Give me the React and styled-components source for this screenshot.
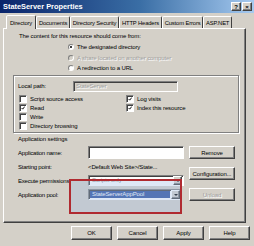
import React from "react";
import styled, { createGlobalStyle, css } from "styled-components";

const Global = createGlobalStyle`
  html, body { margin: 0; padding: 0; background: #d4d0c8; }
  body {
    font-family: "Liberation Sans", Arial, sans-serif;
    font-size: 6px;
    letter-spacing: -0.12px;
    color: #000;
  }
`;

const raised = css`
  border: 1px solid;
  border-color: #fff #404040 #404040 #fff;
  box-shadow: inset -1px -1px 0 #808080;
`;

const sunken = css`
  border: 1px solid;
  border-color: #808080 #fff #fff #808080;
  box-shadow: inset 1px 1px 0 #404040;
`;

const Window = styled.div`
  width: 254px;
  height: 246px;
  box-sizing: border-box;
  background: #d4d0c8;
  display: flex;
  flex-direction: column;
  overflow: hidden;
`;

const TitleBar = styled.div`
  height: 13px;
  display: flex;
  align-items: center;
  justify-content: space-between;
  padding: 0 2px 0 3px;
  background: linear-gradient(to right, #0a246a, #3a6ea5 55%, #a6caf0);
`;

const Title = styled.span`
  color: #fff;
  font-weight: bold;
  font-size: 7.4px;
  letter-spacing: 0;
`;

const Caps = styled.div`
  display: flex;
  gap: 1px;
`;

const CapButton = styled.span`
  ${raised};
  width: 8px;
  height: 7px;
  background: #d4d0c8;
  display: flex;
  align-items: center;
  justify-content: center;
  font-weight: bold;
  font-size: 6px;
  line-height: 1;
`;

const Tabs = styled.div`
  display: flex;
  align-items: flex-end;
  height: 14px;
  padding: 0 0 0 6px;
  margin-top: 1px;
`;

const Tab = styled.div`
  height: ${(p) => (p.$active ? 13 : 11)}px;
  padding: 0 ${(p) => (p.$active ? 3 : 1.8)}px;
  margin-bottom: ${(p) => (p.$active ? -1 : 0)}px;
  display: flex;
  align-items: center;
  border: 1px solid;
  border-bottom: none;
  border-color: #fff #404040 transparent #fff;
  border-radius: 2px 2px 0 0;
  background: #d4d0c8;
  position: relative;
  z-index: ${(p) => (p.$active ? 2 : 1)};
  white-space: nowrap;
  font-size: 5.8px;
`;

const Panel = styled.div`
  height: 195px;
  box-sizing: border-box;
  margin: 0 8px 0 3px;
  border: 1px solid;
  border-color: #fff #404040 #404040 #fff;
  box-shadow: inset -1px -1px 0 #808080;
  padding: 2px 6px 0 9px;
  display: flex;
  flex-direction: column;
`;

const Intro = styled.div`
  height: 10px;
  line-height: 10px;
  padding-left: 6px;
`;

const RadioList = styled.div`
  padding-left: 55px;
  margin-top: 1px;
  display: flex;
  flex-direction: column;
`;

const Row = styled.label`
  display: flex;
  align-items: center;
  gap: 3px;
  height: ${(p) => p.$h || 10.5}px;
  color: ${(p) => (p.$disabled ? "#a0a0a0" : "#000")};
  text-shadow: ${(p) => (p.$disabled ? "1px 1px 0 #fff" : "none")};
  white-space: nowrap;
`;

const RadioDot = styled.span`
  width: 6px;
  height: 6px;
  box-sizing: border-box;
  border-radius: 50%;
  border: 1px solid;
  border-color: #808080 #fff #fff #808080;
  background: ${(p) => (p.$disabled ? "#d4d0c8" : "#fff")};
  display: flex;
  align-items: center;
  justify-content: center;
  &::after {
    content: "";
    width: 2px;
    height: 2px;
    border-radius: 50%;
    background: #000;
    display: ${(p) => (p.$on ? "block" : "none")};
  }
`;

const Group = styled.div`
  margin-top: 1px;
  height: 58px;
  box-sizing: border-box;
  border: 1px solid #808080;
  box-shadow: 1px 1px 0 #fff, inset 1px 1px 0 #fff;
  padding: 4px 4px 0 4px;
`;

const PathRow = styled.div`
  display: flex;
  align-items: center;
  height: 13px;
`;

const PathLabel = styled.span`
  width: 55px;
`;

const TextBox = styled.div`
  ${sunken};
  width: ${(p) => p.$w}px;
  height: ${(p) => p.$h || 11}px;
  box-sizing: border-box;
  background: ${(p) => (p.$disabled ? "#d4d0c8" : "#fff")};
  color: ${(p) => (p.$disabled ? "#a0a0a0" : "#000")};
  text-shadow: ${(p) => (p.$disabled ? "1px 1px 0 #fff" : "none")};
  display: flex;
  align-items: center;
  padding-left: 2px;
  white-space: nowrap;
`;

const Checks = styled.div`
  display: grid;
  grid-template-columns: 107px 1fr;
  margin-top: 2px;
`;

const CheckCol = styled.div`
  display: flex;
  flex-direction: column;
  padding-left: 1px;
`;

const CheckBox = styled.span`
  ${sunken};
  width: 6px;
  height: 6px;
  background: #fff;
  display: flex;
  align-items: center;
  justify-content: center;
`;

const SectionLabel = styled.div`
  height: 10px;
  line-height: 10px;
  margin-top: 1px;
  padding-left: 5px;
`;

const Settings = styled.div`
  position: relative;
  margin-top: 2px;
  padding-left: 5px;
  display: grid;
  grid-template-columns: 65px 96px 46px;
  grid-template-rows: repeat(4, 14px);
  column-gap: 5px;
  align-items: center;
  white-space: nowrap;
`;

const FieldLabel = styled.span`
  letter-spacing: -0.22px;
`;

const Select = styled.div`
  ${sunken};
  width: ${(p) => p.$w}px;
  height: 11px;
  box-sizing: border-box;
  background: #fff;
  display: flex;
  align-items: center;
  gap: 1px;
  padding: 0 1px;
`;

const SelectText = styled.span`
  flex: ${(p) => (p.$selected ? 1 : "none")};
  padding: 0 2px;
  height: 7px;
  line-height: 7px;
  background: ${(p) => (p.$selected ? "#2b4f9c" : "transparent")};
  color: ${(p) => (p.$selected ? "#fff" : "#8c8c8c")};
  margin-right: auto;
`;

const Arrow = styled.span`
  ${raised};
  width: 7px;
  height: 7px;
  background: #d4d0c8;
  display: flex;
  align-items: center;
  justify-content: center;
  &::after {
    content: "";
    border-left: 2px solid transparent;
    border-right: 2px solid transparent;
    border-top: 2px solid #000;
  }
`;

const Button = styled.div`
  ${raised};
  width: ${(p) => p.$w || 44}px;
  height: ${(p) => p.$h || 10}px;
  background: #d4d0c8;
  display: flex;
  align-items: center;
  justify-content: center;
  color: ${(p) => (p.$disabled ? "#a0a0a0" : "#000")};
  text-shadow: ${(p) => (p.$disabled ? "1px 1px 0 #fff" : "none")};
  grid-column: 3;
  grid-row: ${(p) => p.$row || "auto"};
  white-space: nowrap;
`;

const Highlight = styled.div`
  position: absolute;
  left: 56px;
  top: 33px;
  width: 113px;
  height: 35px;
  box-sizing: border-box;
  border: 2px solid #b02a30;
  background: rgba(160, 190, 230, 0.35);
  pointer-events: none;
`;

const Footer = styled.div`
  display: flex;
  justify-content: flex-end;
  gap: 5px;
  padding: 3px 4px 0 0;
`;

const Check = () => (
  <svg width="4" height="4" viewBox="0 0 7 7">
    <path d="M1 3.5 L3 5.5 L6.5 1" stroke="#000" strokeWidth="1.6" fill="none" />
  </svg>
);

const CheckItem = ({ checked, children }) => (
  <Row $h={9}>
    <CheckBox>{checked && <Check />}</CheckBox>
    <span>{children}</span>
  </Row>
);

const tabs = ["Directory", "Documents", "Directory Security", "HTTP Headers", "Custom Errors", "ASP.NET"];

export default function App() {
  return (
    <>
      <Global />
      <Window>
        <TitleBar>
          <Title>StateServer Properties</Title>
          <Caps>
            <CapButton>?</CapButton>
            <CapButton>×</CapButton>
          </Caps>
        </TitleBar>
        <Tabs>
          {tabs.map((t, i) => (
            <Tab key={t} $active={i === 0}>{t}</Tab>
          ))}
        </Tabs>
        <Panel>
          <Intro>The content for this resource should come from:</Intro>
          <RadioList>
            <Row>
              <RadioDot $on />
              <span>The designated directory</span>
            </Row>
            <Row $disabled>
              <RadioDot $disabled />
              <span>A share located on another computer</span>
            </Row>
            <Row>
              <RadioDot />
              <span>A redirection to a URL</span>
            </Row>
          </RadioList>
          <Group>
            <PathRow>
              <PathLabel>Local path:</PathLabel>
              <TextBox $w={105} $disabled>StateServer</TextBox>
            </PathRow>
            <Checks>
              <CheckCol>
                <CheckItem>Script source access</CheckItem>
                <CheckItem checked>Read</CheckItem>
                <CheckItem>Write</CheckItem>
                <CheckItem>Directory browsing</CheckItem>
              </CheckCol>
              <CheckCol>
                <CheckItem checked>Log visits</CheckItem>
                <CheckItem checked>Index this resource</CheckItem>
              </CheckCol>
            </Checks>
          </Group>
          <SectionLabel>Application settings</SectionLabel>
          <Settings>
            <FieldLabel>Application name:</FieldLabel>
            <TextBox $w={96} $h={13} />
            <Button $row="1" $h={11}>Remove</Button>
            <FieldLabel>Starting point:</FieldLabel>
            <span>&lt;Default Web Site&gt;/State...</span>
            <Button $row="2 / 4" $h={11}>Configuration...</Button>
            <FieldLabel>Execute permissions:</FieldLabel>
            <Select $w={96}>
              <SelectText>Scripts only</SelectText>
              <Arrow />
            </Select>
            <FieldLabel>Application pool:</FieldLabel>
            <Select $w={94}>
              <SelectText $selected>StateServerAppPool</SelectText>
              <Arrow />
            </Select>
            <Button $row="4" $h={11} $disabled>Unload</Button>
            <Highlight />
          </Settings>
        </Panel>
        <Footer>
          <Button $w={39} $h={12}>OK</Button>
          <Button $w={39} $h={12}>Cancel</Button>
          <Button $w={39} $h={12}>Apply</Button>
          <Button $w={39} $h={12}>Help</Button>
        </Footer>
      </Window>
    </>
  );
}
